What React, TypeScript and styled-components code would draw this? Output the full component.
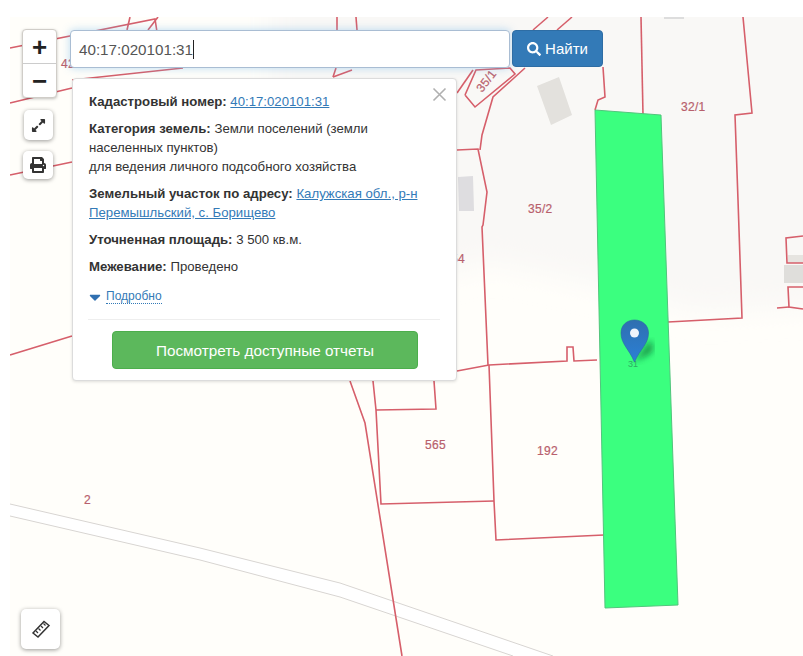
import React from 'react';
import styled, { createGlobalStyle } from 'styled-components';
import { FaExpandAlt, FaPrint, FaSearch, FaCaretDown } from 'react-icons/fa';

const Global = createGlobalStyle`
  html, body { margin: 0; padding: 0; background: #fff; }
  body { font-family: "Liberation Sans", Arial, sans-serif; font-size: 13.2px; color: #333; }
`;

const Page = styled.div`
  position: relative;
  width: 803px;
  height: 656px;
  overflow: hidden;
  background: #fff;
`;

const MapCanvas = styled.svg`
  position: absolute;
  left: 0;
  top: 0;
  width: 803px;
  height: 656px;
`;

const MapLabel = styled.text`
  font-family: "Liberation Sans", Arial, sans-serif;
  font-size: 12px;
  letter-spacing: 0.3px;
  fill: #b8606c;
  stroke: #b8606c;
  stroke-width: 0.2px;
`;

const ZoomBox = styled.div`
  position: absolute;
  left: 22px;
  top: 29px;
  box-sizing: border-box;
  width: 35px;
  display: flex;
  flex-direction: column;
  background: #fff;
  border: 1px solid #d0cdc8;
  border-radius: 4px;
  box-shadow: 0 1px 3px rgba(0, 0, 0, 0.25);
`;

const ZoomButton = styled.div<{ $last?: boolean }>`
  height: 33px;
  display: flex;
  align-items: center;
  justify-content: center;
  font-size: 26px;
  font-weight: 700;
  line-height: 1;
  color: #222;
  border-bottom: ${(p) => (p.$last ? 'none' : '1px solid #ccc')};
`;

const ToolButton = styled.div<{ $left: number; $top: number; $size: number; $height?: number }>`
  position: absolute;
  left: ${(p) => p.$left}px;
  top: ${(p) => p.$top}px;
  width: ${(p) => p.$size}px;
  height: ${(p) => p.$height ?? p.$size}px;
  display: flex;
  align-items: center;
  justify-content: center;
  background: #fff;
  border-radius: 5px;
  box-shadow: 0 1px 4px rgba(0, 0, 0, 0.4);
  color: #333;
`;

const SearchBar = styled.div`
  position: absolute;
  left: 70px;
  top: 30px;
  display: flex;
  gap: 2px;
  align-items: flex-start;
`;

const SearchInput = styled.div`
  box-sizing: border-box;
  width: 440px;
  height: 38px;
  padding: 0 8px;
  display: flex;
  align-items: center;
  background: #fff;
  border: 1px solid #a9bdd3;
  border-radius: 4px;
  box-shadow: 0 0 8px rgba(102, 175, 233, 0.45);
  font-size: 15.2px;
  color: #555;
`;

const Caret = styled.span`
  display: inline-block;
  width: 1px;
  height: 19px;
  background: #222;
`;

const SearchButton = styled.div`
  box-sizing: border-box;
  width: 91px;
  height: 37px;
  display: flex;
  align-items: center;
  justify-content: center;
  gap: 4px;
  background: #337ab7;
  border: 1px solid #2e6da4;
  border-radius: 4px;
  color: #fff;
  font-size: 15px;
`;

const Popup = styled.div`
  position: absolute;
  left: 72px;
  top: 78px;
  box-sizing: border-box;
  width: 385px;
  height: 303px;
  padding: 13px 16px 0;
  background: #fff;
  border: 1px solid #dcdcdc;
  border-radius: 4px;
  box-shadow: 0 1px 3px rgba(0, 0, 0, 0.12);
  line-height: 19px;
`;

const CloseIcon = styled.svg`
  position: absolute;
  right: 9px;
  top: 8px;
  width: 15px;
  height: 15px;
`;

const Para = styled.p`
  margin: 0 0 8px;
  width: 345px;
  white-space: nowrap;
`;

const Strong = styled.b`
  font-weight: 700;
  color: #333;
`;

const Link = styled.a`
  color: #337ab7;
  text-decoration: underline;
`;

const More = styled.div`
  display: flex;
  align-items: center;
  gap: 2px;
  margin: 11px 0 0 -3px;
  height: 19px;
  color: #337ab7;
  font-size: 12px;
`;

const MoreLabel = styled.span`
  line-height: 14px;
  border-bottom: 1px dotted #337ab7;
`;

const Divider = styled.div`
  height: 1px;
  background: #eee;
  margin: 13px 0 11px -1px;
  width: 352px;
`;

const ReportButton = styled.div`
  box-sizing: border-box;
  width: 306px;
  height: 38px;
  margin-left: 23px;
  display: flex;
  align-items: center;
  justify-content: center;
  background: #5cb85c;
  border: 1px solid #4cae4c;
  border-radius: 4px;
  color: #fff;
  font-size: 15.3px;
`;

const red = '#d65f6b';

const parcels: string[] = [
  '10,48 155,19 157,32',
  '10,103 72,88',
  '72,80 183,68',
  '10,175 72,162',
  '10,355 72,336',
  '130,17 127,30',
  '148,30 158,17',
  '337,17 337,30',
  '356,17 357,30',
  '333,77 352,70',
  '333,77 336,68',
  '457,150 478,149 487,192 483,225 482,227 488,365',
  '457,93 473,70',
  '465,95 475,107 515,74 510,68 476,70 465,95',
  '480,150 482,135 493,97 525,68',
  '548,17 533,30',
  '572,17 557,30',
  '603,67 605,97 598,100 595,110',
  '641,17 643,115',
  '743,17 752,113 735,115 738,200 742,318 668,322',
  '457,371 489,365 567,361 567,347 573,347 574,361 597,360',
  '489,365 494,501 496,540 604,535',
  '373,381 376,410 381,504 494,501',
  '376,410 436,409 434,381',
  '350,381 365,423 402,656',
  '803,236 786,238 787,263 803,263',
  '803,287 788,287 789,307 803,309',
  '777,308 789,307',
];

const App: React.FC = () => (
  <Page>
    <Global />
    <MapCanvas viewBox="0 0 803 656">
      <defs>
        <linearGradient id="pin" x1="0" y1="0" x2="0" y2="1">
          <stop offset="0" stopColor="#2f6fb0" />
          <stop offset="1" stopColor="#2b80d6" />
        </linearGradient>
        <filter id="blur"><feGaussianBlur stdDeviation="3" /></filter>
        <filter id="soft"><feGaussianBlur stdDeviation="0.35" /></filter>
        <filter id="wide"><feGaussianBlur stdDeviation="14" /></filter>
        <clipPath id="frame"><rect x="10" y="17" width="793" height="639" /></clipPath>
      </defs>
      <g clipPath="url(#frame)">
        <rect x="10" y="17" width="793" height="639" fill="#fffefa" />
        <polygon
          points="270,-20 840,-20 840,305 700,312 600,285 490,262 440,275 270,275"
          fill="#f9f8f6"
          filter="url(#wide)"
        />
        <polygon points="10,504 200,548 340,583 553,656 513,656 340,597 200,560 10,516" fill="#ffffff" />
        <g filter="url(#soft)">
          <polyline points="10,504 200,548 340,583 553,656" fill="none" stroke="#d8d5d2" strokeWidth="1" />
          <polyline points="10,516 200,560 340,597 513,656" fill="none" stroke="#d8d5d2" strokeWidth="1" />
          <polygon points="537,86 559,77 572,115 551,125" fill="#e3e1dd" />
          <polygon points="458,177 473,176 474,211 459,211" fill="#dedde0" />
          <rect x="664" y="17" width="20" height="2" fill="#dddddd" />
          <rect x="788" y="255" width="15" height="8" fill="#e6e4e0" />
          <rect x="784" y="265" width="19" height="18" fill="#dfdedb" />
          {parcels.map((p) => (
            <polyline key={p} points={p} fill="none" stroke={red} strokeWidth="1.6" />
          ))}
          <polygon points="595,110 661,115 678,605 605,608" fill="#3bff7f" stroke="#52c47c" strokeWidth="1" />
        </g>
        <MapLabel x="528" y="213">35/2</MapLabel>
        <MapLabel x="681" y="111">32/1</MapLabel>
        <MapLabel transform="translate(482,93) rotate(-52)">35/1</MapLabel>
        <MapLabel x="425" y="449">565</MapLabel>
        <MapLabel x="537" y="455">192</MapLabel>
        <MapLabel x="84" y="504">2</MapLabel>
        <MapLabel x="451" y="263">54</MapLabel>
        <MapLabel x="61" y="68">42</MapLabel>
        <path d="M634 362 L650 340 Q657 350 648 355 Z" fill="#0f7a3a" opacity="0.75" filter="url(#blur)" />
        <text x="628" y="367" fontSize="9" fill="#2fae63" fontFamily="Liberation Sans">31</text>
        <path
          d="M634.500 362 C629 349 621 344 621 333 C621 325 627 320 634.500 320 C642 320 648.500 325 648.500 333 C648.500 344 640 349 634.500 362 Z"
          fill="url(#pin)"
          stroke="#2a66a3"
          strokeWidth="0.6"
        />
        <circle cx="634.500" cy="333" r="4.500" fill="#eef4fb" />
      </g>
    </MapCanvas>

    <ZoomBox>
      <ZoomButton>+</ZoomButton>
      <ZoomButton $last>−</ZoomButton>
    </ZoomBox>
    <ToolButton $left={24} $top={110} $size={29} $height={30}>
      <FaExpandAlt size={15} />
    </ToolButton>
    <ToolButton $left={23} $top={151} $size={30} $height={28}>
      <FaPrint size={16} />
    </ToolButton>
    <ToolButton $left={21} $top={609} $size={39} $height={40}>
      <svg width="20" height="20" viewBox="0 0 20 20" fill="none" stroke="#333" strokeWidth="1.5">
        <path d="M2 14 L13 2.500 L18 6.500 L7 18 Z" fill="#fff" />
        <path d="M5 12 L7 14 M7.500 9.500 L9.500 11.500 M10 7 L12 9 M12.500 4.500 L14.500 6.500" strokeWidth="1.2" />
      </svg>
    </ToolButton>

    <SearchBar>
      <SearchInput>40:17:020101:31<Caret /></SearchInput>
      <SearchButton><FaSearch size={14} />Найти</SearchButton>
    </SearchBar>

    <Popup>
      <CloseIcon viewBox="0 0 15 15">
        <path d="M1.500 1.500 L13.500 13.500 M13.500 1.500 L1.500 13.500" stroke="#b0b0b0" strokeWidth="1.6" />
      </CloseIcon>
      <Para><Strong>Кадастровый номер:</Strong> <Link>40:17:020101:31</Link></Para>
      <Para>
        <Strong>Категория земель:</Strong> Земли поселений (земли<br />
        населенных пунктов)<br />
        для ведения личного подсобного хозяйства
      </Para>
      <Para>
        <Strong>Земельный участок по адресу:</Strong> <Link>Калужская обл., р-н<br />Перемышльский, с. Борищево</Link>
      </Para>
      <Para><Strong>Уточненная площадь:</Strong> 3 500 кв.м.</Para>
      <Para><Strong>Межевание:</Strong> Проведено</Para>
      <More><FaCaretDown size={18} color="#2f6fb0" /><MoreLabel>Подробно</MoreLabel></More>
      <Divider />
      <ReportButton>Посмотреть доступные отчеты</ReportButton>
    </Popup>
  </Page>
);

export default App;
